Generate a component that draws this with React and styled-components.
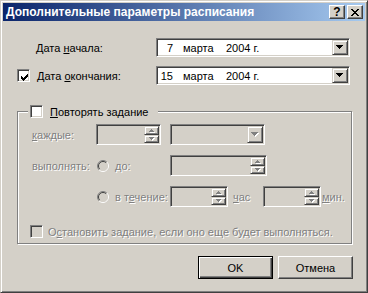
import React from "react";
import styled, { createGlobalStyle } from "styled-components";

const Global = createGlobalStyle`
  html, body { margin: 0; padding: 0; background: #d4d0c8; }
  body { font-family: "Liberation Sans", Arial, sans-serif; font-size: 11px; color: #000; }
  * { box-sizing: border-box; }
`;

const Window = styled.div`
  width: 368px;
  height: 293px;
  background: #d4d0c8;
  border: 1px solid;
  border-color: #d4d0c8 #404040 #404040 #d4d0c8;
  box-shadow: inset 1px 1px #fff, inset -1px -1px #808080;
  padding: 2px;
  display: flex;
  flex-direction: column;
`;

const TitleBar = styled.div`
  height: 18px;
  flex: none;
  display: flex;
  align-items: center;
  padding: 0 2px 0 3px;
  background: linear-gradient(to right, #0a246a, #a6caf0);
  color: #fff;
  font-weight: bold;
  font-size: 12px;
`;

const TitleText = styled.span`
  flex: 1;
  white-space: nowrap;
`;

const TitleButton = styled.div`
  width: 16px;
  height: 14px;
  margin-left: ${(p) => (p.gap ? 2 : 0)}px;
  background: #d4d0c8;
  border: 1px solid;
  border-color: #fff #404040 #404040 #fff;
  box-shadow: inset -1px -1px #808080;
  display: flex;
  align-items: center;
  justify-content: center;
  color: #000;
  font-size: 12px;
  font-weight: bold;
  line-height: 1;
`;

const Body = styled.div`
  display: flex;
  flex-direction: column;
  padding: 17px 12px 0 14px;
`;

const Row = styled.div`
  display: flex;
  align-items: center;
  height: ${(p) => p.h || 19}px;
  margin-top: ${(p) => p.mt || 0}px;
  padding-left: ${(p) => p.pl || 0}px;
`;

const Label = styled.span`
  width: ${(p) => p.w}px;
  flex: none;
  white-space: nowrap;
  color: ${(p) => (p.disabled ? "#808080" : "#000")};
  text-shadow: ${(p) => (p.disabled ? "1px 1px 0 #fff" : "none")};
`;

const Acc = styled.span`
  text-decoration: underline;
  text-underline-offset: 1px;
`;

const Sunken = styled.div`
  flex: none;
  width: ${(p) => p.w}px;
  height: ${(p) => p.h}px;
  background: ${(p) => (p.disabled ? "#d4d0c8" : "#fff")};
  border: 1px solid;
  border-color: #808080 #fff #fff #808080;
  box-shadow: inset 1px 1px #404040, inset -1px -1px #d4d0c8;
  padding: 1px;
  display: flex;
  align-items: center;
  justify-content: flex-end;
`;

const DateText = styled.div`
  flex: 1;
  display: flex;
  align-items: center;
  white-space: nowrap;
`;

const Day = styled.span`
  width: 15px;
  text-align: right;
`;

const Month = styled.span`
  margin-left: 10px;
  width: 43px;
`;

const Raised = styled.div`
  flex: none;
  width: ${(p) => p.w}px;
  height: ${(p) => p.h}px;
  background: #d4d0c8;
  border: 1px solid;
  border-color: #d4d0c8 #404040 #404040 #d4d0c8;
  box-shadow: inset 1px 1px #fff, inset -1px -1px #808080;
  display: flex;
  align-items: center;
  justify-content: center;
`;

const SpinColumn = styled.div`
  display: flex;
  flex-direction: column;
`;

const Check = styled.div`
  flex: none;
  width: 13px;
  height: 13px;
  background: ${(p) => (p.disabled ? "#d4d0c8" : "#fff")};
  border: 1px solid;
  border-color: #808080 #fff #fff #808080;
  box-shadow: inset 1px 1px #404040, inset -1px -1px #d4d0c8;
  padding: 2px;
  margin-right: ${(p) => p.mr}px;
`;

const Group = styled.fieldset`
  width: 335px;
  height: 139px;
  margin: 20px 0 0 0;
  padding: 0;
  min-width: 0;
  border: 1px solid #808080;
  box-shadow: inset 1px 1px #fff, 1px 1px #fff;
`;

const Legend = styled.legend`
  margin-left: 10px;
  padding: 0 10px 0 2px;
  height: 13px;
  display: flex;
  align-items: center;
  background: #d4d0c8;
`;

const Buttons = styled.div`
  display: flex;
  justify-content: flex-end;
  gap: 5px;
  margin-top: 12px;
`;

const Button = styled.div`
  width: 75px;
  height: 23px;
  display: flex;
  align-items: center;
  justify-content: center;
  background: #d4d0c8;
  border: 1px solid;
  border-color: ${(p) => (p.primary ? "#000" : "#fff #404040 #404040 #fff")};
  box-shadow: ${(p) =>
    p.primary
      ? "inset 1px 1px #fff, inset -1px -1px #404040, inset -2px -2px #808080"
      : "inset -1px -1px #808080"};
`;

function Arrow({ up, size = 4, disabled }) {
  const rows = [];
  for (let i = 0; i < size; i++) {
    const y = up ? size - 1 - i : i;
    rows.push(<rect key={i} x={i} y={y} width={size * 2 - 1 - i * 2} height={1} />);
  }
  return (
    <svg width={size * 2} height={size + 1} shapeRendering="crispEdges">
      {disabled && <g fill="#fff" transform="translate(1,1)">{rows}</g>}
      <g fill={disabled ? "#808080" : "#000"}>{rows}</g>
    </svg>
  );
}

function CheckBox({ checked, disabled, mr = 7 }) {
  const tops = [2, 3, 4, 3, 2, 1, 0];
  return (
    <Check disabled={disabled} mr={mr}>
      {checked && (
        <svg width="9" height="9" shapeRendering="crispEdges">
          {tops.map((t, c) => (
            <rect key={c} x={c + 1} y={t + 1} width={1} height={3} fill="#000" />
          ))}
        </svg>
      )}
    </Check>
  );
}

function Radio() {
  return (
    <svg width="12" height="12" style={{ flex: "none", marginRight: 6 }}>
      <circle cx="6" cy="6" r="5" fill="#d4d0c8" />
      <path d="M2.1 9.9 A5.5 5.5 0 0 1 9.9 2.1" fill="none" stroke="#808080" />
      <path d="M9.9 2.1 A5.5 5.5 0 0 1 2.1 9.9" fill="none" stroke="#fff" />
      <path d="M2.8 9.2 A4.5 4.5 0 0 1 9.2 2.8" fill="none" stroke="#404040" />
      <path d="M9.2 2.8 A4.5 4.5 0 0 1 2.8 9.2" fill="none" stroke="#d4d0c8" />
    </svg>
  );
}

function DateCombo({ day }) {
  return (
    <Sunken w={194} h={19}>
      <DateText>
        <Day>{day}</Day>
        <Month>марта</Month>
        <span>2004 г.</span>
      </DateText>
      <Raised w={16} h={15}>
        <Arrow />
      </Raised>
    </Sunken>
  );
}

function Spin({ w }) {
  return (
    <Sunken w={w} h={21} disabled>
      <SpinColumn>
        <Raised w={15} h={9}>
          <Arrow up size={3} disabled />
        </Raised>
        <Raised w={15} h={8}>
          <Arrow size={3} disabled />
        </Raised>
      </SpinColumn>
    </Sunken>
  );
}

export default function App() {
  return (
    <>
      <Global />
      <Window>
        <TitleBar>
          <TitleText>Дополнительные параметры расписания</TitleText>
          <TitleButton>?</TitleButton>
          <TitleButton gap>
            <svg width="8" height="7" shapeRendering="crispEdges">
              <path d="M0.5 0 L7.5 7 M7.5 0 L0.5 7" stroke="#000" strokeWidth="1.6" />
            </svg>
          </TitleButton>
        </TitleBar>
        <Body>
          <Row pl={19}>
            <Label w={120}>
              Дата <Acc>н</Acc>ачала:
            </Label>
            <DateCombo day="7" />
          </Row>
          <Row mt={9}>
            <CheckBox checked />
            <Label w={119}>
              Дата <Acc>о</Acc>кончания:
            </Label>
            <DateCombo day="15" />
          </Row>

          <Group>
            <Legend>
              <CheckBox />
              <span>
                <Acc>П</Acc>овторять задание
              </span>
            </Legend>
            <Row h={21} mt={6} pl={14}>
              <Label w={64} disabled>
                <Acc>к</Acc>аждые:
              </Label>
              <Spin w={65} />
              <Sunken w={95} h={21} disabled style={{ marginLeft: 9 }}>
                <Raised w={16} h={17}>
                  <Arrow disabled />
                </Raised>
              </Sunken>
            </Row>
            <Row h={21} mt={10} pl={14}>
              <Label w={65} disabled>
                выполнять:
              </Label>
              <Radio />
              <Label w={55} disabled>
                <Acc>д</Acc>о:
              </Label>
              <Spin w={97} />
            </Row>
            <Row h={21} mt={10} pl={79}>
              <Radio />
              <Label w={55} disabled>
                в т<Acc>е</Acc>чение:
              </Label>
              <Spin w={58} />
              <Label w={35} disabled style={{ paddingLeft: 5 }}>
                <Acc>ч</Acc>ас
              </Label>
              <Spin w={58} />
              <Label disabled style={{ paddingLeft: 1 }}>
                <Acc>м</Acc>ин.
              </Label>
            </Row>
            <Row h={13} mt={18} pl={12}>
              <CheckBox disabled mr={5} />
              <Label disabled>
                О<Acc>с</Acc>тановить задание, если оно еще будет выполняться.
              </Label>
            </Row>
          </Group>

          <Buttons>
            <Button primary>OK</Button>
            <Button>Отмена</Button>
          </Buttons>
        </Body>
      </Window>
    </>
  );
}
